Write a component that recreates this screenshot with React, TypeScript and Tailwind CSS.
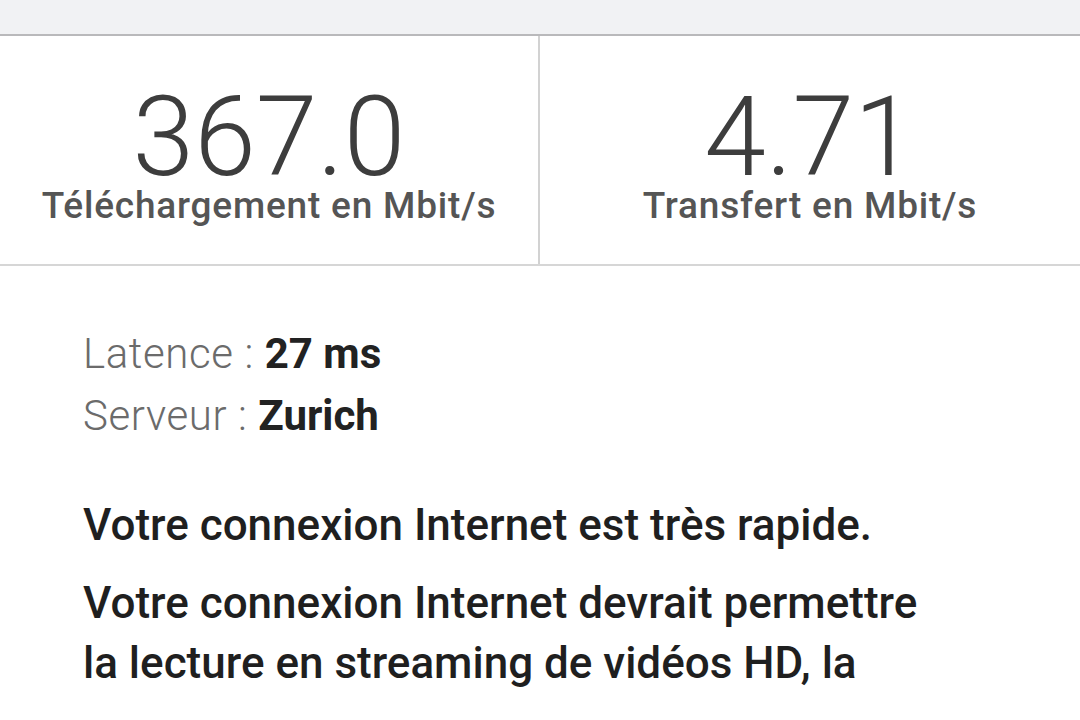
const stats = [
  { value: "367.0", label: "Téléchargement en Mbit/s" },
  { value: "4.71", label: "Transfert en Mbit/s" },
];

const App = () => {
  return (
    <div className="w-[1080px] h-[720px] overflow-hidden bg-white font-['Roboto','Liberation_Sans',sans-serif]">
      <div className="h-[36px] bg-[#f1f2f4] border-b-2 border-[#b9b9bb]" />

      <div className="grid grid-cols-2 border-b-2 border-[#d6d6d6]">
        {stats.map((stat, index) => (
          <div
            key={stat.label}
            className={`h-[228px] pt-[52px] flex flex-col items-center ${index === 0 ? "border-r-2 border-[#d2d2d2]" : ""}`}
          >
            <div className="text-[111px] leading-[98px] font-light text-[#3d3d3d]">{stat.value}</div>
            <div className="text-[37px] leading-[40px] tracking-[0.8px] font-medium text-[#555555]">
              {stat.label}
            </div>
          </div>
        ))}
      </div>

      <div className="pl-[83px] pt-[57px]">
        <div className="text-[42px] leading-[62px] text-[#6b6b6b]">
          <p>
            <span className="font-light tracking-[0.6px]">Latence : </span>
            <span className="font-bold text-[#222222]">27 ms</span>
          </p>
          <p>
            <span className="font-light tracking-[0.6px]">Serveur : </span>
            <span className="font-bold text-[#222222]">Zurich</span>
          </p>
        </div>

        <div className="w-[870px] text-[44px] leading-[60px] font-medium text-[#1f1f1f]">
          <p className="mt-[48px]">Votre connexion Internet est très rapide.</p>
          <p className="mt-[18px]">
            Votre connexion Internet devrait permettre la lecture en streaming de vidéos HD, la
          </p>
        </div>
      </div>
    </div>
  );
};

export default App;
